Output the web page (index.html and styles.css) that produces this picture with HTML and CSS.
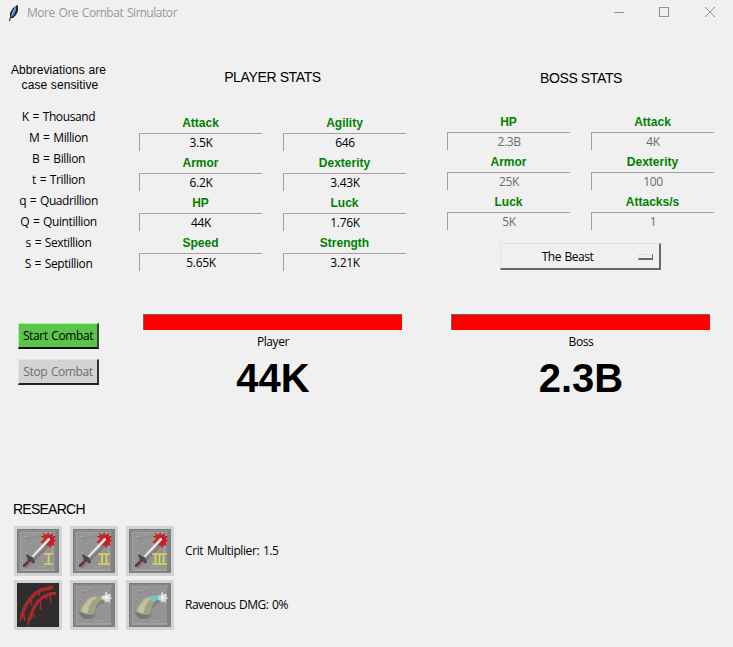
FILE: index.html
```html
<!DOCTYPE html>
<html lang="en">
<head>
<meta charset="utf-8">
<title>More Ore Combat Simulator</title>
<link rel="stylesheet" href="styles.css">
</head>
<body>
<svg width="0" height="0" class="defs">
  <defs>
    <g id="stone">
      <rect width="42" height="44" fill="#949494"/>
      <path d="M0 0h42l-4 3H3v38l-3 3z" fill="#898989"/>
      <path d="M0 0h42v1H1v43H0z" fill="#7c7c7c"/>
      <path d="M3 3h36v1H4v37H3z" fill="#9f9f9f"/>
      <path d="M42 0v44H0l4-4h34V4z" fill="#818181"/>
      <path d="M4 40h34v2H3z" fill="#a2a2a2"/>
      <path d="M7 7h4v1H7zM14 5h5v1h-5zM5 16h3v1H5zM8 24h3v1H8zM5 30h1v4H5zM25 37h5v1h-5zM35 18h1v6h-1zM21 38h3v1h-3zM6 11h2v1H6z" fill="#a3a3a3"/>
      <path d="M9 9h3v1H9zM16 7h4v1h-4zM6 18h3v1H6zM11 35h4v1h-4zM34 27h2v1h-2z" fill="#868686"/>
    </g>
    <g id="sword">
      <path d="M8 39l7-6 1-3 17-17 1 2-16 17-8 7z" fill="#7c7c7c"/>
      <path d="M27 9l-3-1V7h3l-1-3 4 2 1-3 2 3 3-2v3h3l-2 3 2 2-2 1v4l-2-1-2 3-2-3-4 1v-3h-4l3-3z" fill="#c42525"/>
      <path d="M29 11l2-4 4 1 2 4-3 3-4-1z" fill="#d61b1f"/>
      <path d="M31 9h2v2L16 28.500 14.500 27z" fill="#cfcfcf"/>
      <path d="M32.200 9.500h.8v1.200L16 28l-.6-.6z" fill="#f4f4f4"/>
      <path d="M9 25l2 .500 2 2 2 .5 2 2.500 1 3.500-2 .500-2-2-3-1-1-3z" fill="#4a4a4a"/>
      <path d="M6 36l6-6 2 2-5 5-1 1H6z" fill="#643438"/>
    </g>
    <g id="horn">
      <path d="M8 33l4 3h6l4-2 1-7 4-6 4-1-2-4-8 1z" fill="#737373" opacity=".6"/>
      <path d="M6 30l2-5 3-5 4-5 5-2 9 .500v3l-4 3-2 4-1 6-3 4-5 1.500-5-1.500z" fill="#a3a282"/>
      <path d="M8 28l3-6 5-6 5-2 3 .5-5 4-3 5-1 6-3 1z" fill="#c2c1a1"/>
      <path d="M6 29l4 1 5 2 5-.500-2 3-4 .500-5-1-3-3z" fill="#757575"/>
      <path d="M28.500 13l3.500-1 .500-3h1l1.500 2.500 3-1-.5 3 1.500 2-2 1v3l-2.500-1-2.500 1-.5-2.500-3-1z" fill="#dcdcd6"/>
      <path d="M32 13h3v3h-3z" fill="#f4f4f0"/>
    </g>
  </defs>
</svg>

<header class="titlebar">
  <svg class="feather" width="12" height="18" viewBox="0 0 12 18">
    <path d="M9 1l1 1v5l-2 4-3 3H3L2 17H1l1-4V9l3-5z" fill="#20252e"/>
    <path d="M8 3v3l-2 5-2 1V9l2-4z" fill="#4e8ddd"/>
    <path d="M8 2L5 8l-2 5" fill="none" stroke="#b7d4f5" stroke-width=".6"/>
  </svg>
  <span class="title">More Ore Combat Simulator</span>
  <svg class="controls" width="104" height="12" viewBox="0 0 104 12" fill="none" stroke="#919191" shape-rendering="crispEdges">
    <path d="M1 6.500h10M46.500 1.500h9v9h-9z"/>
    <path d="M92 1l10 10M102 1L92 11" shape-rendering="auto"/>
  </svg>
</header>

<main class="window">
  <div class="upper">
    <aside class="legend">
      <p class="note">Abbreviations are<br><span class="second">case sensitive</span></p>
      <ul>
        <li>K = Thousand</li>
        <li>M = Million</li>
        <li>B = Billion</li>
        <li>t = Trillion</li>
        <li>q = Quadrillion</li>
        <li>Q = Quintillion</li>
        <li>s = Sextillion</li>
        <li>S = Septillion</li>
      </ul>
    </aside>
    <section class="player">
      <h2>PLAYER STATS</h2>
      <div class="stats">
        <label>Attack<input value="3.5K"></label>
        <label>Agility<input value="646"></label>
        <label>Armor<input value="6.2K"></label>
        <label>Dexterity<input value="3.43K"></label>
        <label>HP<input value="44K"></label>
        <label>Luck<input value="1.76K"></label>
        <label>Speed<input value="5.65K"></label>
        <label>Strength<input value="3.21K"></label>
      </div>
    </section>
    <section class="boss">
      <h2>BOSS STATS</h2>
      <div class="stats">
        <label>HP<input disabled value="2.3B"></label>
        <label>Attack<input disabled value="4K"></label>
        <label>Armor<input disabled value="25K"></label>
        <label>Dexterity<input disabled value="100"></label>
        <label>Luck<input disabled value="5K"></label>
        <label>Attacks/s<input disabled value="1"></label>
      </div>
      <button class="picker"><span>The Beast</span><i></i></button>
    </section>
  </div>

  <div class="combat">
    <div class="buttons">
      <button class="btn start">Start Combat</button>
      <button class="btn stop" disabled>Stop Combat</button>
    </div>
    <div class="fighter">
      <div class="health"></div>
      <div class="name">Player</div>
      <div class="amount">44K</div>
    </div>
    <div class="fighter">
      <div class="health"></div>
      <div class="name">Boss</div>
      <div class="amount">2.3B</div>
    </div>
  </div>

  <section class="research">
    <h2>RESEARCH</h2>
    <div class="row">
      <svg class="tile" viewBox="0 0 42 44"><use href="#stone"/><use href="#sword"/><path d="M27 25h9M27 35h9M31.500 25v10" class="numeral"/></svg>
      <svg class="tile" viewBox="0 0 42 44"><use href="#stone"/><use href="#sword"/><path d="M25 25h12M25 35h12M29 25v10M33.500 25v10" class="numeral"/></svg>
      <svg class="tile" viewBox="0 0 42 44"><use href="#stone"/><use href="#sword"/><path d="M23 25h15M23 35h15M26.500 25v10M30.500 25v10M34.500 25v10" class="numeral"/></svg>
      <span>Crit Multiplier: 1.5</span>
    </div>
    <div class="row">
      <svg class="tile" viewBox="0 0 42 44">
        <rect width="42" height="44" fill="#302d2d"/>
        <g fill="none" stroke="#a6292c">
          <path d="M36 4l-5 1.500-7 1.500-6 4-5 5-4 6-3 7-1 6" stroke-width="3.600"/>
          <path d="M39 10.500h-5l-7 3-6 5-4 6-3 7-2 6" stroke-width="3.200"/>
          <path d="M3.500 32v6M7.500 32v6M14.500 17v6M22.500 10v3M11.500 36v6M16.500 30v5M23.500 18v9M33.500 12v8M29.500 13v3" stroke-width="1.500"/>
        </g>
      </svg>
      <svg class="tile" viewBox="0 0 42 44"><use href="#stone"/><use href="#horn"/></svg>
      <svg class="tile" viewBox="0 0 42 44"><use href="#stone"/><use href="#horn"/><path d="M20 14l3-1.500h6v3l-4 3.500h-2l-1-3z" fill="#72c2c5"/><path d="M29 13l3-.500v4l-3 .500z" fill="#9ed9df"/></svg>
      <span class="tight">Ravenous DMG: 0%</span>
    </div>
  </section>
</main>
</body>
</html>
```

FILE: styles.css
```css
* { box-sizing: border-box; margin: 0; padding: 0; }
body {
  width: 733px; height: 647px; overflow: hidden;
  background: #f0f0f0; color: #000;
  font: 12px/16px "Open Sans", "Noto Sans", sans-serif;
  letter-spacing: -0.4px; word-spacing: 1px;
}
.defs { position: absolute; }
.titlebar { display: flex; align-items: center; height: 25px; padding: 0 16px 0 8px; color: #999; }
.feather { margin-right: 7px; }
.title { letter-spacing: -0.45px; }
.controls { margin-left: auto; margin-bottom: 2px; }

.upper { display: flex; height: 289px; }
.legend { width: 139px; padding: 38px 22px 0 0; text-align: center; }
.note, h2 { font-family: "Liberation Sans", Arial, sans-serif; letter-spacing: 0; word-spacing: 0; }
.note { font-size: 12px; line-height: 15px; letter-spacing: 0.1px; }
.note .second { padding-left: 3px; }
.legend ul { margin-top: 13px; list-style: none; }
.legend li { height: 21px; line-height: 22px; }

h2 { font-size: 14px; font-weight: 400; line-height: 16px; text-align: center; letter-spacing: -0.37px; }
.player, .boss { width: 267px; padding-top: 44px; }
.boss { margin-left: 41px; }
.stats { display: grid; grid-template-columns: 123px 123px; column-gap: 21px; grid-auto-rows: 40px; padding-top: 30px; }
.boss h2 { padding: 1px 0 0 1px; height: 16px; }
.boss .stats { padding-top: 29px; }
.stats label {
  color: #008000; text-align: center; letter-spacing: 0; word-spacing: 0;
  font: bold 12px/16px "Liberation Sans", Arial, sans-serif;
}
.stats input {
  display: block; width: 123px; height: 18px; margin-top: 2px;
  border: solid #a0a0a0; border-width: 1px 0 0 1px;
  background: transparent; color: #000; text-align: center;
  font: 12px/17px "Open Sans", sans-serif; letter-spacing: -0.35px;
}
.stats input:disabled { color: #6d6d6d; }
.picker {
  display: flex; align-items: center; width: 161px; height: 27px; margin: 9px 0 0 53px; padding: 1px 6px 0 0;
  border: solid; border-width: 1px 2px 2px 1px; border-color: #e3e3e3 #696969 #696969 #e3e3e3;
  background: #f0f0f0; color: #000; font: inherit; letter-spacing: -0.5px; word-spacing: 1px;
}
.picker span { flex: 1; padding-right: 4px; }
.picker i { width: 15px; height: 6px; border: solid; border-width: 1px 1px 2px 1px; border-color: #e3e3e3 #696969 #696969 #e3e3e3; }

.combat { display: flex; height: 186px; }
.buttons { flex: none; width: 143px; padding: 9px 0 0 18px; }
.btn {
  display: block; width: 81px; height: 26px; margin-bottom: 10px;
  border: solid; border-width: 1px 2px 2px 1px; padding-top: 1px;
  font: inherit; letter-spacing: -0.4px; word-spacing: 1px; white-space: nowrap;
}
.start { background: #5ac54a; border-color: #a4f598 #2a4f24 #111 #a4f598; color: #000; }
.stop { background: #d3d3d3; border-color: #e3e3e3 #333 #222 #e3e3e3; color: #6d6d6d; }
.fighter { flex: none; width: 259px; margin-right: 49px; text-align: center; }
.health { height: 16px; background: #f00; border: solid #696969; border-width: 1px 0 0 1px; }
.name { margin-top: 4px; padding-left: 1px; line-height: 16px; }
.amount { margin-top: 5px; padding-left: 1px; font: bold 40px/46px "Liberation Sans", Arial, sans-serif; letter-spacing: 0; }

.research { padding-left: 14px; }
.research h2 { height: 26px; line-height: 18px; margin-left: -1px; text-align: left; letter-spacing: -0.75px; }
.row { display: flex; align-items: center; gap: 8px; height: 50px; margin-bottom: 4px; }
.row span { padding-left: 3px; }
.row .tight { letter-spacing: -0.5px; }
.tile { width: 48px; height: 50px; padding: 3px; background: #d3d3d3; }
.numeral { fill: none; stroke: #ddd35c; stroke-width: 1.7; }
```
